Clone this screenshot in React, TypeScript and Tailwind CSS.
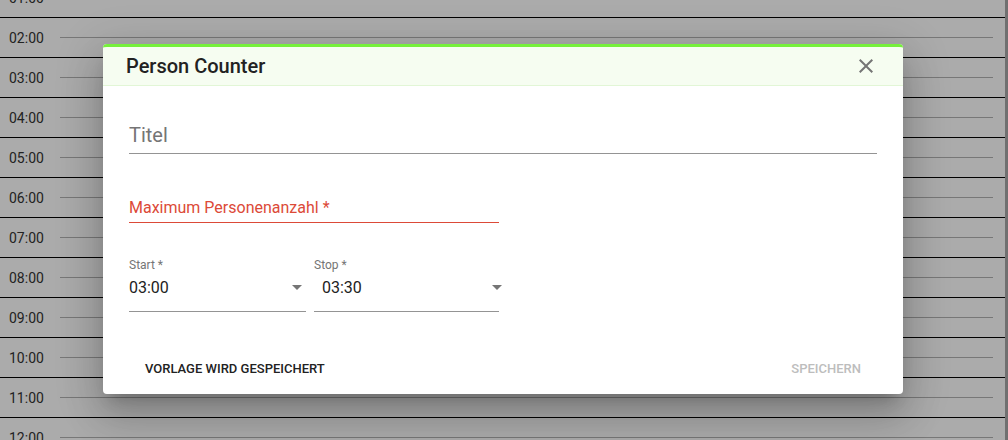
import React from "react";

const hours = ["01:00","02:00","03:00","04:00","05:00","06:00","07:00","08:00","09:00","10:00","11:00","12:00"];

function Arrow({ className }: { className: string }) {
  return (
    <svg width="24" height="24" viewBox="0 0 24 24" className={className} fill="#757575">
      <path d="M7 10l5 5 5-5z" />
    </svg>
  );
}

export default function App() {
  return (
    <div className="relative w-[1008px] h-[440px] overflow-hidden bg-[#ababab]" style={{ fontFamily: "Roboto, 'Liberation Sans', sans-serif" }}>
      <div className="flex h-full">
        <div className="w-[1005px] -mt-[23px]">
          {hours.map((h) => (
            <div key={h} className="h-[40px] border-t border-black flex items-center">
              <span className="w-[60px] pl-[9px] text-[14px] leading-none text-[#222]">{h}</span>
              <div className="h-px w-[933px] bg-[#777]" />
            </div>
          ))}
        </div>
        <div className="w-[3px] h-full bg-[#707070]" />
      </div>

      <div className="absolute left-[103px] top-[44px] w-[800px] h-[350px] bg-white rounded-[4px] flex flex-col shadow-[0_11px_15px_-7px_rgba(0,0,0,0.2),0_24px_38px_3px_rgba(0,0,0,0.14),0_9px_46px_8px_rgba(0,0,0,0.12)]">
        <div className="h-[42px] rounded-t-[4px] border-t-[3px] border-[#76f03c] bg-[#f6fdf1] border-b border-b-[#e2f6d6] flex items-center justify-between pl-[23px] pr-[25px]">
          <span className="text-[20px] font-medium text-[#222] leading-none">Person Counter</span>
          <svg width="24" height="24" viewBox="0 0 24 24" fill="#757575">
            <path d="M19 6.41L17.59 5 12 10.59 6.41 5 5 6.41 10.59 12 5 17.59 6.41 19 12 13.41 17.59 19 19 17.59 13.41 12z" />
          </svg>
        </div>

        <div className="flex-1 flex flex-col px-[26px]">
          <div className="mt-[37px] border-b border-[#949494] pb-[6px]">
            <div className="text-[20px] leading-[24px] text-[#757575]">Titel</div>
          </div>

          <div className="mt-[44px] w-[370px] border-b border-[#dc4a38] pb-[4px]">
            <div className="text-[16px] leading-[20px] text-[#dc4a38]">Maximum Personenanzahl *</div>
          </div>

          <div className="mt-[35px] flex gap-[8px]">
            <div className="w-[177px]">
              <div className="text-[12px] leading-[14px] text-[#757575]">Start *</div>
              <div className="relative mt-[6px] border-b border-[#949494] pb-[13px]">
                <div className="text-[16px] leading-[20px] text-[#222]">03:00</div>
                <Arrow className="absolute right-[-3px] top-[-3px]" />
              </div>
            </div>
            <div className="w-[185px]">
              <div className="text-[12px] leading-[14px] text-[#757575]">Stop *</div>
              <div className="relative mt-[6px] border-b border-[#949494] pb-[13px] pl-[8px]">
                <div className="text-[16px] leading-[20px] text-[#222]">03:30</div>
                <Arrow className="absolute right-[-10px] top-[-3px]" />
              </div>
            </div>
          </div>

          <div className="mt-[47px] flex justify-between">
            <span className="px-4 text-[13px] leading-[20px] font-medium text-[#222]">VORLAGE WIRD GESPEICHERT</span>
            <span className="px-4 text-[13px] leading-[20px] font-medium text-[#bdbdbd]">SPEICHERN</span>
          </div>
        </div>
      </div>
    </div>
  );
}
